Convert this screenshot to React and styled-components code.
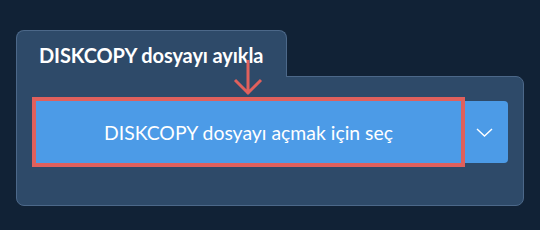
import React from "react"
import styled, { createGlobalStyle } from "styled-components"

const Global = createGlobalStyle`
  html, body {
    margin: 0;
    padding: 0;
    background-color: #112236;
  }
  body {
    font-family: "Lato", "Liberation Sans", sans-serif;
  }
`

const Page = styled.div`
  position: relative;
  padding: 30px 16px 24px 16px;
  width: 540px;
  height: 230px;
  box-sizing: border-box;
`

const Tab = styled.div`
  position: relative;
  z-index: 1;
  display: inline-block;
  width: 271px;
  box-sizing: border-box;
  height: 47px;
  margin-bottom: -1px;
  padding: 12px 0 0 22px;
  background-color: #2e4a69;
  border: 1px solid #4c6889;
  border-bottom: none;
  border-radius: 8px 8px 0 0;
  color: #ffffff;
  font-size: 20px;
  font-weight: 700;
  line-height: 24px;
  letter-spacing: -0.1px;
`

const Panel = styled.div`
  display: flex;
  width: 508px;
  box-sizing: border-box;
  height: 130px;
  padding: 24px 15px 0 19px;
  background-color: #2e4a69;
  border: 1px solid #4c6889;
  border-radius: 0 8px 8px 8px;
`

const Group = styled.div`
  display: flex;
  height: 62px;
`

const MainButton = styled.button`
  width: 425px;
  height: 62px;
  border: none;
  border-radius: 0;
  background-color: #4c9be7;
  color: #ffffff;
  font-family: "Lato", "Liberation Sans", sans-serif;
  font-size: 19.4px;
  font-weight: 400;
  outline: ${(p) => (p.$highlight ? "4px solid #e0605c" : "none")};
  outline-offset: 0;
  position: relative;
  z-index: 1;
`

const DropButton = styled.button`
  display: flex;
  align-items: center;
  justify-content: center;
  width: 47px;
  height: 62px;
  padding: 0;
  border: none;
  border-radius: 0 4px 4px 0;
  background-color: #4c9be7;
`

const Arrow = styled.svg`
  position: absolute;
  left: 232px;
  top: 58px;
  z-index: 2;
`

export default function App() {
  return (
    <Page>
      <Global />
      <Tab>DISKCOPY dosyayı ayıkla</Tab>
      <Panel>
        <Group>
          <MainButton $highlight>DISKCOPY dosyayı açmak için seç</MainButton>
          <DropButton>
            <svg width="17" height="9" viewBox="0 0 17 9">
              <path d="M1 1 L8.5 8 L16 1" fill="none" stroke="#ffffff" strokeWidth="1.4" />
            </svg>
          </DropButton>
        </Group>
      </Panel>
      <Arrow width="32" height="40" viewBox="0 0 32 40">
        <path d="M16 2 V36 M3 22 L16 35 L29 22" fill="none" stroke="#e0605c" strokeWidth="3" />
      </Arrow>
    </Page>
  )
}
